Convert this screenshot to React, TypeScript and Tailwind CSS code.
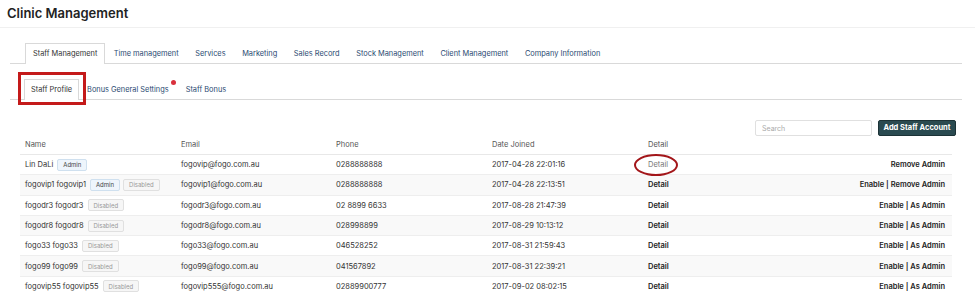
import React from "react";

const mainTabs = [
  "Staff Management",
  "Time management",
  "Services",
  "Marketing",
  "Sales Record",
  "Stock Management",
  "Client Management",
  "Company Information",
];

type Staff = {
  name: string;
  admin?: boolean;
  disabled?: boolean;
  email: string;
  phone: string;
  joined: string;
  action: string;
};

const staff: Staff[] = [
  { name: "Lin DaLi", admin: true, email: "fogovip@fogo.com.au", phone: "0288888888", joined: "2017-04-28 22:01:16", action: "Remove Admin" },
  { name: "fogovip1 fogovip1", admin: true, disabled: true, email: "fogovip1@fogo.com.au", phone: "0288888888", joined: "2017-04-28 22:13:51", action: "Enable | Remove Admin" },
  { name: "fogodr3 fogodr3", disabled: true, email: "fogodr3@fogo.com.au", phone: "02 8899 6633", joined: "2017-08-28 21:47:39", action: "Enable | As Admin" },
  { name: "fogodr8 fogodr8", disabled: true, email: "fogodr8@fogo.com.au", phone: "028998899", joined: "2017-08-29 10:13:12", action: "Enable | As Admin" },
  { name: "fogo33 fogo33", disabled: true, email: "fogo33@fogo.com.au", phone: "046528252", joined: "2017-08-31 21:59:43", action: "Enable | As Admin" },
  { name: "fogo99 fogo99", disabled: true, email: "fogo99@fogo.com.au", phone: "041567892", joined: "2017-08-31 22:39:21", action: "Enable | As Admin" },
  { name: "fogovip55 fogovip55", disabled: true, email: "fogovip555@fogo.com.au", phone: "02889900777", joined: "2017-09-02 08:02:15", action: "Enable | As Admin" },
];

const cols = "grid grid-cols-[156px_155px_156px_156px_156px_1fr] items-center";

export default function App() {
  return (
    <div className="w-[975px] h-[296px] overflow-hidden bg-white text-[#333] font-['Inter','Liberation_Sans',sans-serif]">
      {/* Page header */}
      <div className="h-[28px] border-b border-[#f0f0f0] pl-[7px] flex items-center">
        <h1 className="text-[13px] font-semibold text-[#222]">Clinic Management</h1>
      </div>

      <div className="pl-[10px] pr-[13px]">
        {/* Main tabs */}
        <div className="mt-[15px] flex border-b border-[#d9d9d9] pl-[15px] h-[21px]">
          {mainTabs.map((t, i) => (
            <div
              key={t}
              className={
                i === 0
                  ? "px-[7px] h-[21px] flex items-center border border-b-0 border-[#d9d9d9] bg-white -mb-px text-[7.4px] text-[#333]"
                  : "px-[8.3px] h-[21px] flex items-center text-[7.4px] text-[#2b4a72]"
              }
            >
              {t}
            </div>
          ))}
        </div>

        {/* Sub tabs */}
        <div className="mt-[15px] flex border-b border-[#d9d9d9] pl-[14px] h-[21px]">
          <div className="relative px-[6px] h-[21px] flex items-center border border-b-0 border-[#d9d9d9] bg-white -mb-px text-[7.4px] text-[#333]">
            Staff Profile
            <div className="absolute -left-[7px] -top-[8px] w-[68px] h-[33px] border-[3px] border-[#c41a1a]" />
          </div>
          <div className="relative pl-[8px] pr-[8px] h-[21px] flex items-center text-[7.4px] text-[#2b4a72]">
            Bonus General Settings
            <span className="absolute right-[1px] top-[1px] w-[5px] h-[5px] rounded-full bg-[#d9303c]" />
          </div>
          <div className="px-[9px] h-[21px] flex items-center text-[7.4px] text-[#2b4a72]">Staff Bonus</div>
        </div>

        {/* Search + add */}
        <div className="mt-[20px] flex justify-end gap-[6px] pr-[6px]">
          <input
            placeholder="Search"
            className="w-[117px] h-[16px] border border-[#e0e0e0] rounded-[2px] px-[6px] text-[7px] placeholder:text-[#aaa] outline-none"
          />
          <button className="w-[78px] h-[16px] bg-[#2a4a50] border border-[#1c3236] rounded-[2px] text-white text-[7.5px] font-bold">
            Add Staff Account
          </button>
        </div>

        {/* Table */}
        <div className="ml-[10px] mr-[10px] text-[7.5px] text-[#333]">
          <div className={`${cols} h-[19px] border-b border-[#e8e8e8] text-[#555]`}>
            <div className="pl-[5px]">Name</div>
            <div className="pl-[5px]">Email</div>
            <div className="pl-[5px]">Phone</div>
            <div className="pl-[5px]">Date Joined</div>
            <div className="pl-[5px]">Detail</div>
            <div />
          </div>
          {staff.map((s, i) => (
            <div
              key={s.email}
              className={`${cols} h-[20.3px] border-b border-[#eeeeee] ${i % 2 === 1 ? "bg-[#f9f9f9]" : "bg-white"}`}
            >
              <div className="pl-[5px] flex items-center gap-[3px] whitespace-nowrap">
                <span className="mr-[1px] text-[#333]">{s.name}</span>
                {s.admin && (
                  <span className="px-[5px] h-[12px] flex items-center border border-[#cfe0ef] bg-[#eef5fc] rounded-[2px] text-[6px] text-[#444]">
                    Admin
                  </span>
                )}
                {s.disabled && (
                  <span className="px-[5px] h-[12px] flex items-center border border-[#e0e0e0] bg-[#f6f6f6] rounded-[2px] text-[6px] text-[#999]">
                    Disabled
                  </span>
                )}
              </div>
              <div className="pl-[5px]">{s.email}</div>
              <div className="pl-[5px]">{s.phone}</div>
              <div className="pl-[5px]">{s.joined}</div>
              <div className="pl-[5px]">
                {i === 0 ? (
                  <span className="relative text-[#777]">
                    Detail
                    <span className="absolute -left-[14px] -top-[6px] w-[44px] h-[22px] rounded-[50%] border-[2.5px] border-[#a3161a]" />
                  </span>
                ) : (
                  <span className="font-semibold text-[#222]">Detail</span>
                )}
              </div>
              <div className="text-right pr-[7px] font-semibold text-[#222]">{s.action}</div>
            </div>
          ))}
        </div>
      </div>
    </div>
  );
}
